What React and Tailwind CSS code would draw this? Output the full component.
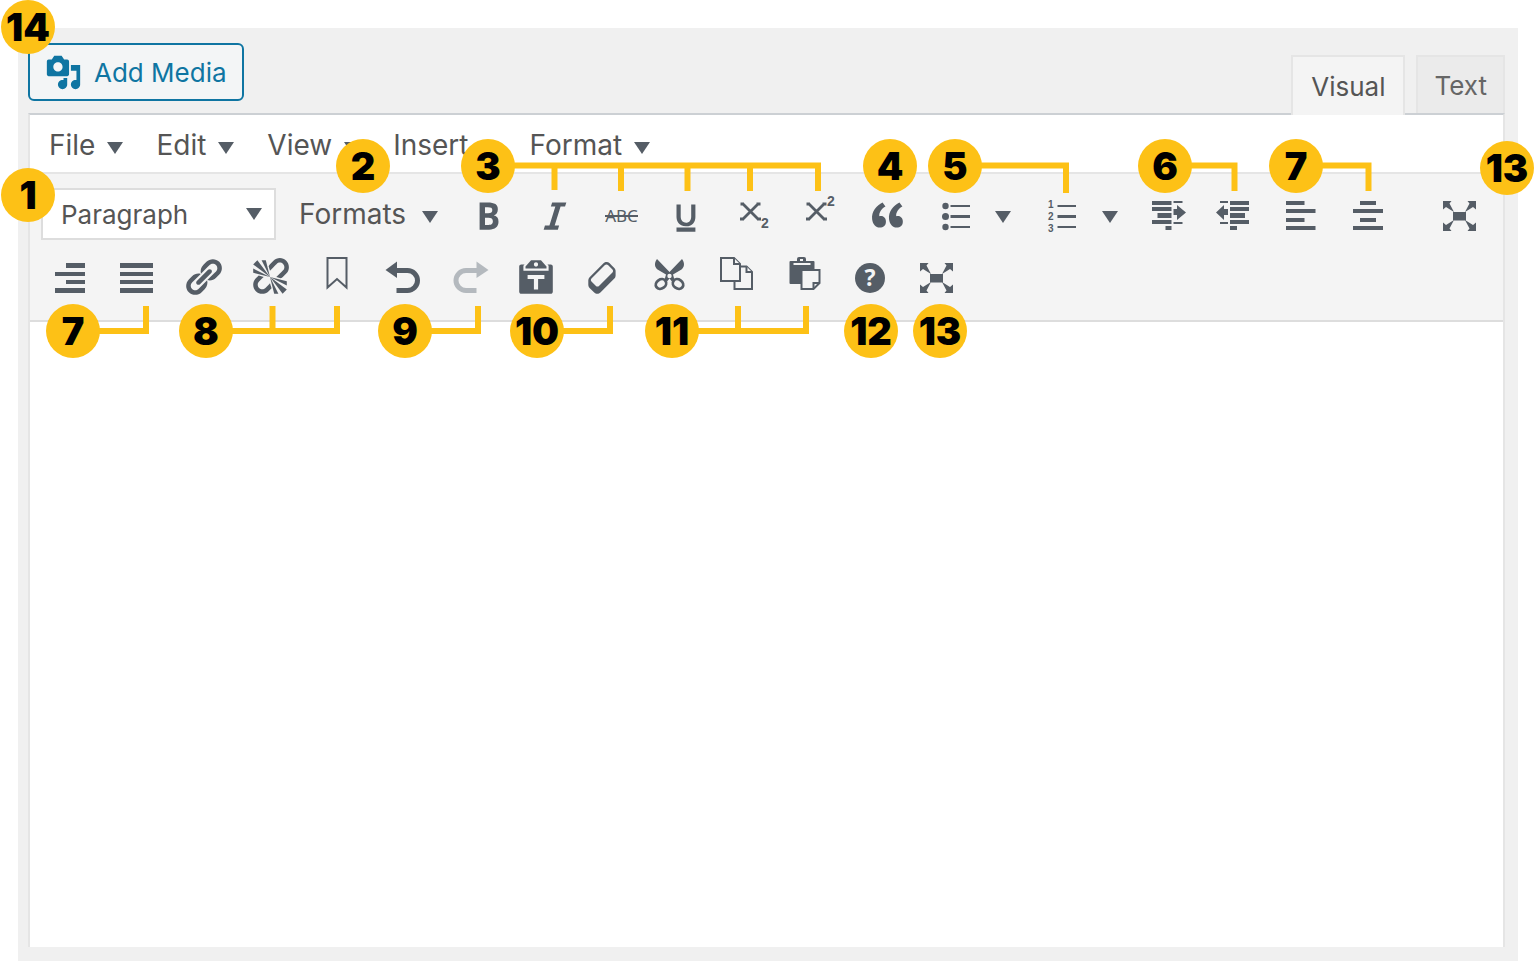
import React from 'react'

const Icon = ({ box = 42, className = 'w-[42px] h-[42px]', children }) => (
  <svg viewBox={`0 0 ${box} ${box}`} className={`overflow-visible ${className}`} fill="currentColor" aria-hidden="true">
    {children}
  </svg>
)

const Dash = ({ d, className }) => (
  <Icon box={20} className={className}>
    <path d={d} />
  </Icon>
)

const Caret = ({ className = '' }) => (
  <svg viewBox="0 0 16 12" className={`w-4 h-3 shrink-0 text-[#555d66] ${className}`} fill="currentColor" aria-hidden="true">
    <path d="M0 0h16L8 12z" />
  </svg>
)

const MEDIA =
  'M13 11V4c0-.55-.45-1-1-1h-1.67L9 1H5L3.67 3H2c-.55 0-1 .45-1 1v7c0 .55.45 1 1 1h10c.55 0 1-.45 1-1zM7 4.5c1.38 0 2.5 1.12 2.5 2.5S8.38 9.5 7 9.5 4.5 8.38 4.5 7 5.62 4.5 7 4.5zM14 6h5v10.5c0 1.38-1.12 2.5-2.5 2.5S14 17.88 14 16.5s1.12-2.5 2.5-2.5c.17 0 .34.02.5.05V9h-3V6zm-4 8.05V13h2v3.5c0 1.38-1.12 2.5-2.5 2.5S7 17.88 7 16.5 8.12 14 9.5 14c.17 0 .34.02.5.05z'
const BOLD =
  'M6 4v13h4.54c1.37 0 2.46-.33 3.26-1 .8-.66 1.2-1.58 1.2-2.77 0-.84-.17-1.51-.51-2.01s-.9-.85-1.67-1.03v-.09c.57-.1 1.02-.4 1.36-.9s.51-1.13.51-1.91c0-1.14-.39-1.98-1.17-2.5C12.75 4.26 11.5 4 9.78 4H6zm2.57 5.15V6.26h1.36c.73 0 1.27.11 1.61.32.34.22.51.58.51 1.07 0 .54-.16.92-.47 1.15s-.82.35-1.51.35h-1.5zm0 2.19h1.6c1.44 0 2.16.53 2.16 1.61 0 .6-.17 1.05-.51 1.34s-.86.43-1.57.43H8.57v-3.38z'
const ITALIC = 'M14.78 6h-2.13l-2.8 9h2.12l-.62 2H4.6l.62-2h2.14l2.8-9H8.03l.62-2h6.75z'
const UNDERLINE =
  'M14 5h-2v5.71c0 1.99-1.12 2.98-2.45 2.98-1.32 0-2.55-1-2.55-2.96V5H5v5.87c0 1.91 1 4.54 4.48 4.54 3.49 0 4.52-2.58 4.52-4.5V5zm0 13v-2H5v2h9z'
const QUOTE =
  'M9.49 13.22c0-.74-.2-1.38-.61-1.9-.62-.78-1.83-.88-2.53-.72-.29-1.65 1.11-3.75 2.92-4.65L7.88 4c-2.73 1.3-5.42 4.28-4.96 8.05C3.21 14.43 4.59 16 6.54 16c.85 0 1.56-.25 2.12-.75s.83-1.18.83-2.03zm8.05 0c0-.74-.2-1.38-.61-1.9-.63-.78-1.83-.88-2.53-.72-.29-1.65 1.11-3.75 2.92-4.65L15.93 4c-2.73 1.3-5.41 4.28-4.95 8.05.29 2.38 1.66 3.95 3.61 3.95.85 0 1.56-.25 2.12-.75s.83-1.18.83-2.03z'
const LINK =
  'M17.74 2.76c1.68 1.69 1.68 4.41 0 6.1l-1.53 1.52c-1.12 1.12-2.7 1.47-4.14 1.09l2.62-2.61.76-.77.76-.76c.84-.84.84-2.2 0-3.04-.84-.85-2.2-.85-3.04 0l-.77.76-3.38 3.38c-.37-1.44-.02-3.02 1.1-4.14l1.52-1.53c1.69-1.68 4.42-1.68 6.1 0zM8.59 13.43l5.34-5.34c.42-.42.42-1.1 0-1.52-.44-.43-1.13-.39-1.53 0l-5.33 5.34c-.42.42-.42 1.1 0 1.52.44.43 1.13.39 1.52 0zm-.76 2.29l4.14-4.15c.38 1.44.03 3.02-1.09 4.14l-1.52 1.53c-1.69 1.68-4.41 1.68-6.1 0-1.68-1.68-1.68-4.42 0-6.1l1.53-1.52c1.12-1.12 2.7-1.47 4.14-1.1l-4.14 4.15c-.85.84-.85 2.2 0 3.05.84.84 2.2.84 3.04 0z'
const UNLINK =
  'M17.74 2.26c1.68 1.69 1.68 4.41 0 6.1l-1.53 1.52c-.32.33-.69.58-1.08.77L13 10l1.69-1.64.76-.77.76-.76c.84-.84.84-2.2 0-3.04-.84-.85-2.2-.85-3.04 0l-.77.76-.76.76L10 7l-.65-2.14c.19-.38.44-.75.77-1.07l1.52-1.53c1.69-1.68 4.42-1.68 6.1 0zM2 4l8 6-6-8zm4-2l4 8-2-8H6zM2 6l8 4-8-2V6zm7.36 7.69L10 13l.74 2.35-1.38 1.39c-1.69 1.68-4.41 1.68-6.1 0-1.68-1.68-1.68-4.42 0-6.1l1.39-1.38L7 10l-.69.64-1.52 1.53c-.85.84-.85 2.2 0 3.04.84.85 2.2.85 3.04 0zM18 16l-8-6 6 8zm-4 2l-4-8 2 8h2zm4-4l-8-4 8 2v2z'
const PASTE_TEXT =
  'M12.38 2L15 5v1H5V5l2.64-3h4.74zM10 5c.55 0 1-.44 1-1 0-.55-.45-1-1-1s-1 .45-1 1c0 .56.45 1 1 1zm5.45-1H17c.55 0 1 .45 1 1v12c0 .56-.45 1-1 1H3c-.55 0-1-.44-1-1V5c0-.55.45-1 1-1h1.55L4 4.63V7h12V4.63zM14 11V9H6v2h3v5h2v-5h3z'
const ERASER =
  'M14.29 4.59l1.1 1.11c.41.4.61.94.61 1.47v2.12c0 .53-.2 1.07-.61 1.47l-6.63 6.63c-.4.41-.94.61-1.47.61s-1.07-.2-1.47-.61l-1.11-1.1-1.1-1.11c-.41-.4-.61-.94-.61-1.47v-2.12c0-.54.2-1.07.61-1.48l6.63-6.62c.4-.41.94-.61 1.47-.61s1.06.2 1.47.61zm-6.21 9.7l6.42-6.42c.39-.39.39-1.03 0-1.43L12.36 4.3c-.19-.19-.45-.29-.72-.29s-.52.1-.71.29l-6.42 6.42c-.39.4-.39 1.04 0 1.43l2.14 2.14c.38.38 1.04.38 1.43 0z'

const Strike = () => (
  <Icon>
    <text x="21.5" y="28" fontSize="17" textAnchor="middle" fontFamily="'Noto Sans', sans-serif">
      ABC
    </text>
    <path d="M5 21h33v2H5z" />
  </Icon>
)

const Cross = () => (
  <path
    d="M9.5 9.5L25.5 25.5M25.5 9.5L9.5 25.5M7.5 10H11M23.5 10H27.5M7 25H11M24 25H28"
    fill="none"
    stroke="currentColor"
    strokeWidth="2.8"
  />
)

const Subscript = () => (
  <Icon>
    <Cross />
    <text x="28" y="34" fontSize="14" fontWeight="700" fontFamily="'Liberation Sans', sans-serif">
      2
    </text>
  </Icon>
)

const Superscript = () => (
  <Icon>
    <Cross />
    <text x="28" y="12" fontSize="14" fontWeight="700" fontFamily="'Liberation Sans', sans-serif">
      2
    </text>
  </Icon>
)

const BulletList = () => (
  <Icon>
    <circle cx="11.5" cy="12" r="3.2" />
    <circle cx="11.5" cy="22.5" r="3.5" />
    <circle cx="11.5" cy="33" r="3.2" />
    <path d="M16.5 11H36v2H16.5zM16.5 21H36v3H16.5zM16.5 32H36v2H16.5z" />
  </Icon>
)

const NumberList = () => (
  <Icon>
    <g fontSize="10" fontWeight="700" fontFamily="'Liberation Sans', sans-serif">
      <text x="7" y="14">1</text>
      <text x="7" y="26">2</text>
      <text x="7" y="38">3</text>
    </g>
    <path d="M16.5 11H35v2H16.5zM16.5 21H35v3H16.5zM16.5 32H35v2H16.5z" />
  </Icon>
)

const Indent = () => (
  <Icon>
    <path d="M6 7h19.5v4H6zM6 13h19.5v4H6zM11.5 19h14v5h-14zM6 26h19.5v4H6zM19.5 32h6v4h-6zM27.5 7h9v2h-9zM27.5 28h9v2h-9zM27.5 15H31v-4l9 7.5-9 7.5v-5h-3.5z" />
  </Icon>
)

const Outdent = () => (
  <Icon>
    <path d="M17 7h19v4H17zM17 13h19v4H17zM17 19h15v5H17zM17 26h19v4H17zM17 32h7v4h-7zM7 7h8v2H7zM7 28h8v2H7zM15 15h-4v-4l-8 7.5 8 7.5v-5h4z" />
  </Icon>
)

const AlignLeft = () => (
  <Icon>
    <path d="M7 7h18.5v4H7zM7 15h29.5v4H7zM7 24h18.5v4H7zM7 32h29.5v4H7z" />
  </Icon>
)

const AlignCenter = () => (
  <Icon>
    <path d="M14 7h16v4H14zM7 15h30v4H7zM14 24h16v4H14zM7 32h30v4H7z" />
  </Icon>
)

const AlignRight = () => (
  <Icon>
    <path d="M17 7h19v5H17zM6 16h30v4H6zM17 24h19v4H17zM6 32h30v5H6z" />
  </Icon>
)

const Justify = () => (
  <Icon>
    <path d="M4 7h33v5H4zM4 16h33v4H4zM4 24h33v4H4zM4 32h33v5H4z" />
  </Icon>
)

const Fullscreen = () => (
  <Icon>
    <path d="M15 18h13v8.5H15zM5 7h8.5L11.5 9.5l4.5 8.5-8-5-3 2.5zM38 7h-8.5l2 2.5L27 18l8-5 3 2.5zM5 37h8.5l-2-2.5 4.5-8.5-8 5-3-2.5zM38 37h-8.5l2-2.5-4.5-8.5 8 5 3-2.5z" />
  </Icon>
)

const Bookmark = () => (
  <Icon>
    <path d="M11.5 2h19v29.5L21 23l-9.5 8.5z" fill="none" stroke="currentColor" strokeWidth="2" />
  </Icon>
)

const Undo = () => (
  <Icon>
    <path d="M3.5 14L15 5.5V22z" />
    <path d="M14 14.5h11.5a10 10 0 0 1 0 20h-11" fill="none" stroke="currentColor" strokeWidth="5" />
  </Icon>
)

const Redo = () => (
  <Icon>
    <path d="M39.5 14L27.5 5.5V22z" />
    <path d="M28 14.5H17a10 10 0 0 0 0 20h10.5" fill="none" stroke="currentColor" strokeWidth="5" />
  </Icon>
)

const Cut = () => (
  <Icon>
    <path d="M9 3C6 7 6.5 11 9.5 13.5l8.5 5-1.500 5.500 3 1 2-2.500 2 2.500 3-1-1.500-5.500 8.500-5c3-2.500 3.500-6.500.5-10.500L21.500 16z" />
    <circle cx="21.5" cy="20" r="2.2" className="fill-[#f4f4f4]" />
    <ellipse cx="13" cy="28" rx="5.5" ry="4.5" transform="rotate(-35 13 28)" className="fill-[#f4f4f4]" stroke="currentColor" strokeWidth="2.8" />
    <ellipse cx="30" cy="28" rx="5.5" ry="4.5" transform="rotate(35 30 28)" className="fill-[#f4f4f4]" stroke="currentColor" strokeWidth="2.8" />
  </Icon>
)

const Copy = () => (
  <Icon>
    <g className="fill-[#f4f4f4]" stroke="currentColor" strokeWidth="2">
      <path d="M19.5 10.5h12l5.5 5.5v17H19.5z" />
      <path d="M31.5 10.5V16H37" />
      <path d="M6 2h13l6 6v17H6z" />
      <path d="M19 2v6h6" />
    </g>
  </Icon>
)

const Paste = () => (
  <Icon>
    <path d="M7.5 6a1 1 0 0 1 1-1H15V3a2 2 0 0 1 2-2h5a2 2 0 0 1 2 2v2h7.5a1 1 0 0 1 1 1v22h-24a1 1 0 0 1-1-1z" />
    <path d="M11.5 7h17v2h-17zM18 3h3v2h-3z" className="fill-[#f4f4f4]" />
    <path d="M19.5 14h18v13l-6 6h-12z" className="fill-[#f4f4f4]" stroke="currentColor" strokeWidth="2" />
    <path d="M31.5 33v-6h6" fill="none" stroke="currentColor" strokeWidth="2" />
  </Icon>
)

const Help = () => (
  <Icon>
    <circle cx="22" cy="22" r="15" />
    <text x="22" y="30" fontSize="23" fontWeight="700" textAnchor="middle" fontFamily="'Noto Sans', sans-serif" className="fill-[#f4f4f4]">
      ?
    </text>
  </Icon>
)

const menus = ['File', 'Edit', 'View', 'Insert', 'Format']

const textTools = [
  ['Bold', <Dash d={BOLD} />],
  ['Italic', <Dash d={ITALIC} />],
  ['Strikethrough', <Strike />],
  ['Underline', <Dash d={UNDERLINE} />],
  ['Subscript', <Subscript />],
  ['Superscript', <Superscript />],
  ['Blockquote', <Dash d={QUOTE} />],
]

const listTools = [
  ['Bulleted list', <BulletList />],
  ['Numbered list', <NumberList />],
]

const blockTools = [
  ['Increase indent', <Indent />],
  ['Decrease indent', <Outdent />],
  ['Align left', <AlignLeft />],
  ['Align center', <AlignCenter />],
]

const secondRow = [
  ['Align right', <AlignRight />],
  ['Justify', <Justify />],
  ['Insert link', <Dash d={LINK} />],
  ['Remove link', <Dash d={UNLINK} />],
  ['Anchor', <Bookmark />],
  ['Undo', <Undo />],
  ['Redo', <Redo />, true],
  ['Paste as text', <Dash d={PASTE_TEXT} />],
  ['Clear formatting', <Dash d={ERASER} />],
  ['Cut', <Cut />],
  ['Copy', <Copy />],
  ['Paste', <Paste />],
  ['Keyboard shortcuts', <Help />],
  ['Fullscreen', <Fullscreen />],
]

// left / top of each 54px badge
const badges = [
  [14, 1, 0],
  [1, 1, 168],
  [2, 336, 139],
  [3, 461, 139],
  [4, 863, 139],
  [5, 928, 139],
  [6, 1138, 139],
  [7, 1269, 139],
  [7, 46, 304],
  [8, 179, 304],
  [9, 378, 304],
  [10, 510, 304],
  [11, 645, 304],
  [12, 844, 304],
  [13, 913, 304],
]

const Tool = ({ tool: [label, icon, disabled] }) => (
  <button
    type="button"
    aria-label={label}
    disabled={disabled}
    className="flex items-center justify-center text-[#555d66] disabled:text-[#b4b9be]">
    {icon}
  </button>
)

const Badge = ({ children, className = '', style }) => (
  <span
    className={`absolute flex items-center justify-center w-[54px] h-[54px] rounded-full bg-[#fdc116] text-black text-[38px] leading-none font-black ${className}`}
    style={style}>
    {children}
  </span>
)

const Callouts = () => (
  <div className="absolute inset-0 pointer-events-none overflow-hidden">
    <svg className="absolute left-0 top-0 w-full h-full text-[#fdc116]" fill="none" stroke="currentColor" strokeWidth="6" aria-hidden="true">
      <path d="M488 165.5H818V191M554.5 165v25M621 165v26M687.5 165v26M750 165v26" />
      <path d="M955 165.5H1066V193" />
      <path d="M1165 165.5H1234.5V191" />
      <path d="M1296 165.5H1368.5V191" />
      <path d="M73 331H146V306" />
      <path d="M205 331H337V306M272.5 331V306" />
      <path d="M405 331H478V306" />
      <path d="M537 331H610V306" />
      <path d="M672 331H806V306M738 331V306" />
    </svg>
    {badges.map(([n, left, top]) => (
      <Badge key={`${n}-${left}`} style={{ left, top }}>
        {n}
      </Badge>
    ))}
    <Badge className="right-0 top-[141px]">13</Badge>
  </div>
)

const App = () => {
  return (
    <div className="relative flex min-h-screen bg-white pt-7 pb-px pl-[18px] pr-4 font-['Inter',sans-serif] text-[#555]">
      <div className="flex flex-1 flex-col bg-[#f0f0f0] pl-[10px] pr-[13px] pb-[14px]">
        <div className="flex items-end justify-between pt-[15px]">
          <button
            type="button"
            className="flex items-center gap-3 h-[58px] mb-3 px-[15px] rounded-md border-2 border-[#0f75a2] bg-[#f3f5f6] text-[#0f75a2] text-[26px]">
            <Dash d={MEDIA} className="w-[37px] h-[37px]" />
            Add Media
          </button>
          <div className="flex items-end gap-[11px] text-[26px]" role="tablist">
            <button
              type="button"
              role="tab"
              aria-selected="true"
              className="relative h-[60px] -mb-[2px] px-[18px] border-2 border-b-0 border-[#e5e5e5] bg-[#f4f4f4]">
              Visual
            </button>
            <button
              type="button"
              role="tab"
              aria-selected="false"
              className="h-[58px] px-4 border-2 border-b-0 border-[#e5e5e5] bg-[#ebebeb] text-[#666]">
              Text
            </button>
          </div>
        </div>

        <div className="flex flex-1 flex-col border-x-2 border-x-[#e5e5e5] border-t-2 border-t-[#ccd0d4] bg-white">
          <div className="flex items-center gap-[33px] h-[59px] pl-[19px] pt-[2px] border-b-2 border-[#e5e5e5] text-[28px]">
            {menus.map((menu) => (
              <button key={menu} type="button" className="flex items-center gap-3">
                {menu}
                <Caret className="mt-1.5" />
              </button>
            ))}
          </div>

          <div className="flex flex-col gap-2 pt-[14px] pb-4 pl-[7px] border-b-2 border-[#ddd] bg-[#f4f4f4]">
            <div className="flex h-[54px] pr-[23px]">
              <div className="grid items-center w-[235px] h-[52px] ml-1 mr-[23px] text-[26px]">
                <select
                  aria-label="Block format"
                  className="col-start-1 row-start-1 appearance-none w-full h-full pl-[18px] border-2 border-[#ddd] bg-white">
                  <option>Paragraph</option>
                </select>
                <div className="col-start-1 row-start-1 justify-self-end pr-[14px] pointer-events-none">
                  <Caret />
                </div>
              </div>
              <button type="button" className="flex items-center gap-4 w-[156px] h-[52px] text-[28px]">
                Formats
                <Caret className="mt-1.5" />
              </button>
              <div className="grid grid-cols-7 w-[465px]">
                {textTools.map((tool) => (
                  <Tool key={tool[0]} tool={tool} />
                ))}
              </div>
              {listTools.map((tool) => (
                <div key={tool[0]} className="flex items-center w-[107px] pl-[14px] gap-[19px]">
                  <Tool tool={tool} />
                  <button type="button" aria-label={`${tool[0]} options`}>
                    <Caret className="mt-1" />
                  </button>
                </div>
              ))}
              <div className="grid grid-cols-4 w-[266px]">
                {blockTools.map((tool) => (
                  <Tool key={tool[0]} tool={tool} />
                ))}
              </div>
              <div className="flex ml-auto">
                <Tool tool={['Distraction-free writing', <Fullscreen />]} />
              </div>
            </div>
            <div className="grid grid-cols-14 w-[932px] h-[54px]">
              {secondRow.map((tool) => (
                <Tool key={tool[0]} tool={tool} />
              ))}
            </div>
          </div>

          <textarea aria-label="Content" className="flex-1 w-full resize-none p-5 outline-none text-[26px]" />
        </div>
      </div>
      <Callouts />
    </div>
  )
}

export default App
